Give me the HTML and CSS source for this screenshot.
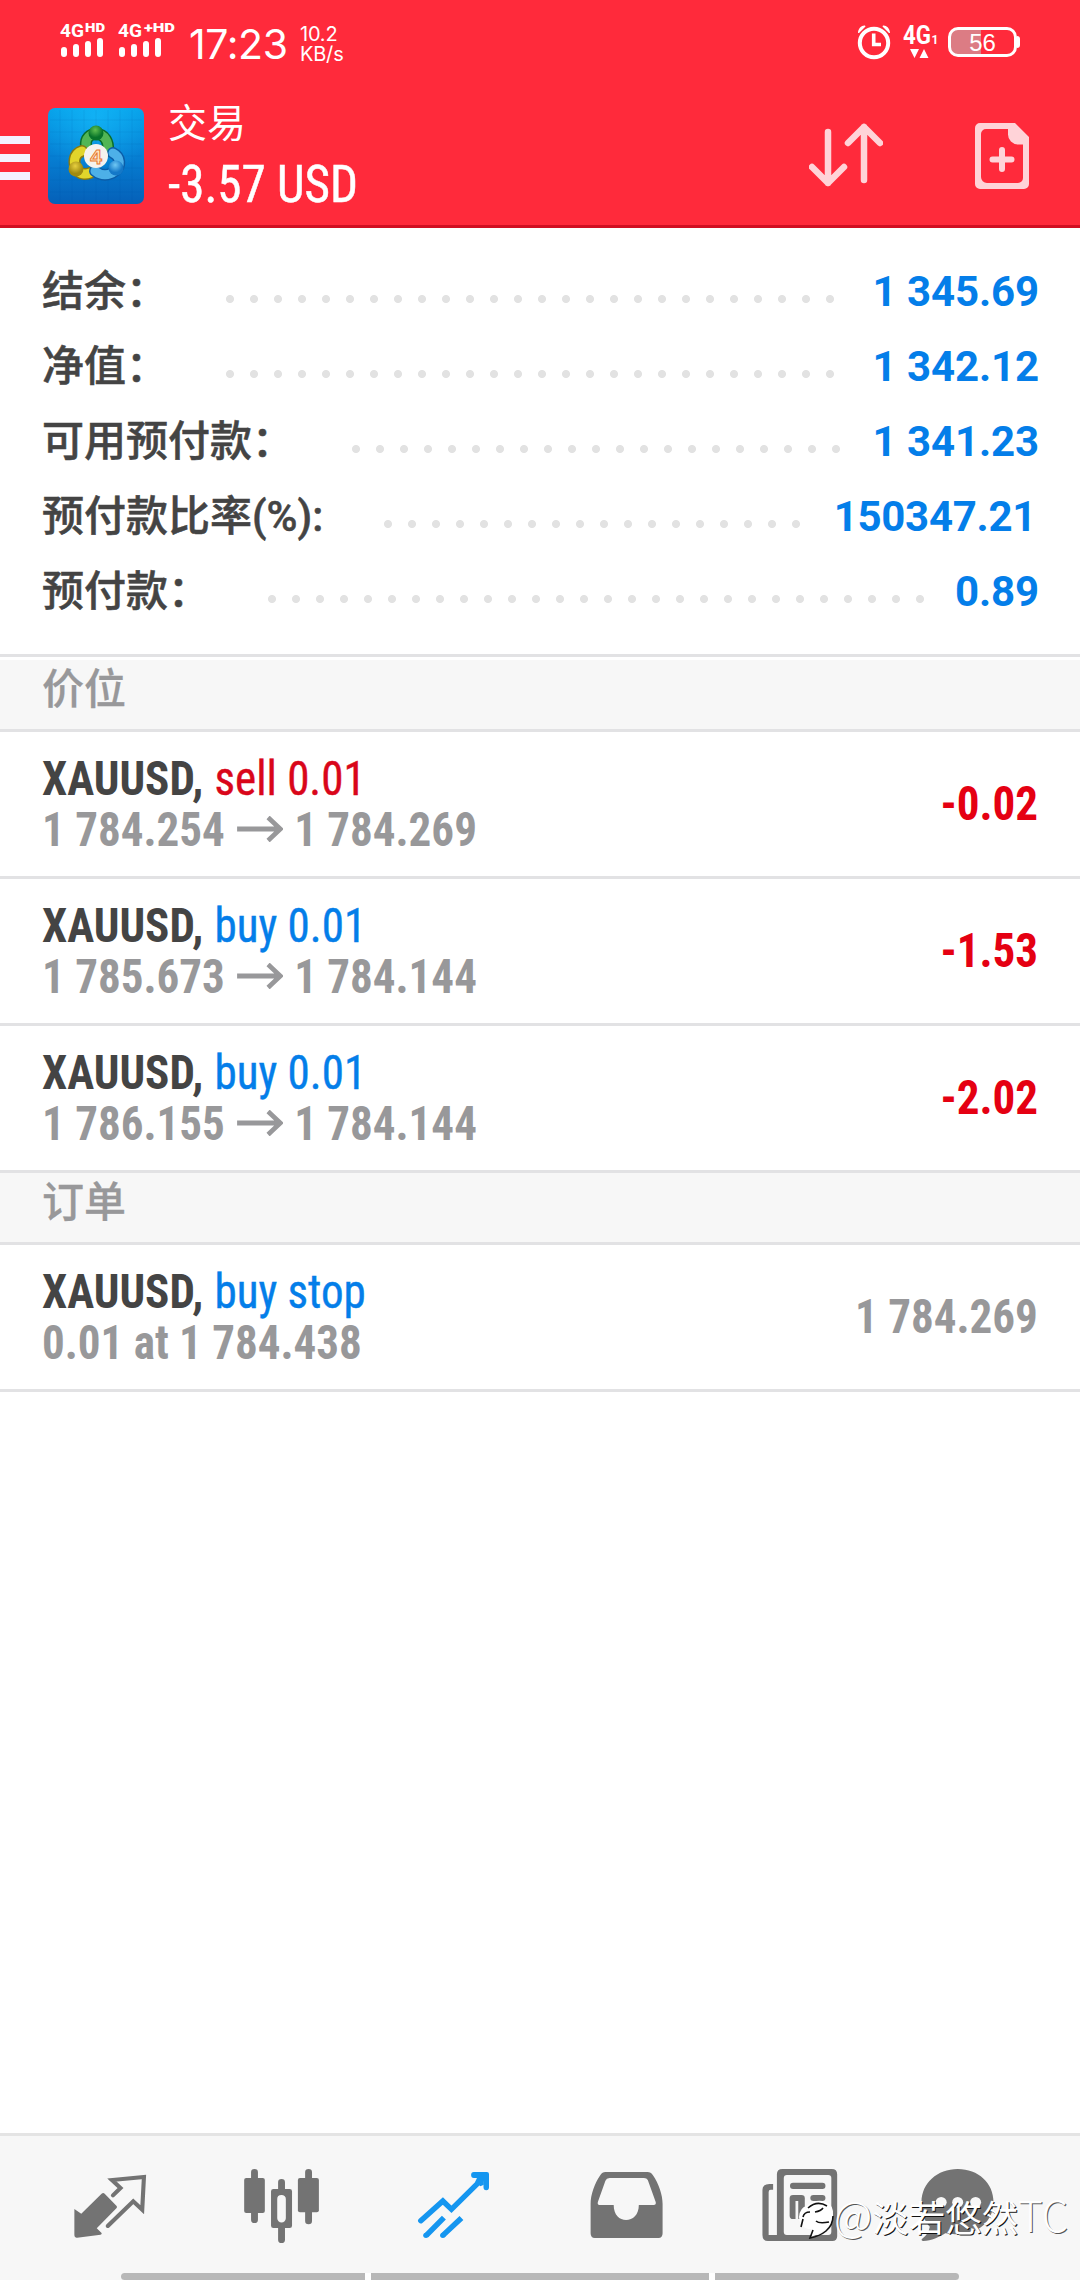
FILE: index.html
```html
<!DOCTYPE html>
<html lang="zh-CN">
<head>
<meta charset="utf-8">
<title>交易</title>
<link rel="stylesheet" href="styles.css">
</head>
<body>
<div class="screen">
  <header class="header">
    <div class="status">
      <svg class="sig1" viewBox="0 0 50 40" width="50" height="40">
        <text class="net" x="0" y="15" textLength="24" lengthAdjust="spacingAndGlyphs">4G</text>
        <text class="net-sup" x="25" y="10" textLength="20" lengthAdjust="spacingAndGlyphs">HD</text>
        <path class="bars" d="M4 28v4M16 25v7M28 22v10M40 19v13"/>
      </svg>
      <svg class="sig2" viewBox="0 0 60 40" width="60" height="40">
        <text class="net" x="0" y="15" textLength="24" lengthAdjust="spacingAndGlyphs">4G</text>
        <text class="net-sup" x="26" y="10" textLength="31" lengthAdjust="spacingAndGlyphs">+HD</text>
        <path class="bars" d="M4 28v4M16 25v7M28 22v10M40 19v13"/>
      </svg>
      <span class="time">17:23</span>
      <span class="speed"><span>10.2</span><span>KB/s</span></span>
      <svg class="alarm" viewBox="0 0 36 36" width="36" height="36">
        <g fill="none" stroke="#fff">
          <circle cx="18" cy="19" r="14.2" stroke-width="4"/>
          <path d="M17.700 9.500v11h7.300" stroke-width="3.600"/>
        </g>
        <path fill="#fff" d="M2 9C2 4 6 1 9 1.500L9.500 2.500 3 9zM34 9C34 4 30 1 27 1.500L26.500 2.500 33 9z"/>
      </svg>
      <svg class="data" viewBox="0 0 36 36" width="36" height="36">
        <text class="data-4g" x="0" y="19" textLength="28" lengthAdjust="spacingAndGlyphs">4G</text>
        <text class="data-1" x="28.500" y="19">1</text>
        <path fill="#fff" d="M7 24h9l-4.500 9zM16.500 33h9L21 24z"/>
      </svg>
      <span class="battery"><span class="cell">56</span><span class="tip"></span></span>
    </div>
    <div class="appbar">
      <svg class="menu" viewBox="0 0 30 44" width="30" height="44"><path fill="#f4f1ff" d="M0 0h30v8H0zM0 18h30v8H0zM0 36h30v8H0z"/></svg>
      <svg class="logo" viewBox="0 0 96 96" width="96" height="96">
        <defs>
          <linearGradient id="sky" x1="0" y1="0" x2="0" y2="1"><stop offset="0" stop-color="#06a0e8"/><stop offset=".5" stop-color="#067fd3"/><stop offset="1" stop-color="#0560b8"/></linearGradient>
          <radialGradient id="glow" cx=".5" cy=".1" r=".6"><stop offset="0" stop-color="#18c0ff" stop-opacity=".6"/><stop offset="1" stop-color="#18c0ff" stop-opacity="0"/></radialGradient>
          <radialGradient id="gr" cx=".45" cy=".3"><stop offset="0" stop-color="#5fc050"/><stop offset="1" stop-color="#08742a"/></radialGradient>
          <radialGradient id="ye" cx=".45" cy=".3"><stop offset="0" stop-color="#e8d040"/><stop offset="1" stop-color="#a08a10"/></radialGradient>
          <radialGradient id="bl" cx=".45" cy=".3"><stop offset="0" stop-color="#70c8f4"/><stop offset="1" stop-color="#1478c8"/></radialGradient>
        </defs>
        <rect width="96" height="96" rx="7" fill="url(#sky)"/>
        <rect width="96" height="96" rx="7" fill="url(#glow)"/>
        <path d="M12 2v92M24 2v92M36 2v92M48 2v92M60 2v92M72 2v92M84 2v92M2 12h92M2 24h92M2 36h92M2 48h92M2 60h92M2 72h92M2 84h92" stroke="#0a5cab" stroke-opacity=".1"/>
        <g fill="none" stroke-linecap="round">
          <path d="M38 38C37 30 42 26 48 26c9 0 13 8 12 17" stroke="#0a6d2b" stroke-width="12"/>
          <path d="M38 38C37 30 42 26 48 26c9 0 13 8 12 17" stroke="#52b655" stroke-width="9"/>
          <path d="M34 43c-9 3-9 13-5 19 3 4 8 5 13 3" stroke="#897910" stroke-width="12"/>
          <path d="M34 43c-9 3-9 13-5 19 3 4 8 5 13 3" stroke="#e2d52b" stroke-width="9"/>
          <path d="M65 45c8 4 8 13 2 18-6 5-14 5-20 0" stroke="#0b5da8" stroke-width="12"/>
          <path d="M65 45c8 4 8 13 2 18-6 5-14 5-20 0" stroke="#4db0e8" stroke-width="9"/>
        </g>
        <circle cx="48" cy="25" r="7.500" fill="url(#gr)"/>
        <circle cx="28" cy="61" r="7.500" fill="url(#ye)"/>
        <circle cx="68" cy="60" r="7.500" fill="url(#bl)"/>
        <circle cx="48" cy="48" r="12" fill="#f5f2ee"/>
        <text x="48" y="55.500" class="four">4</text>
      </svg>
      <div class="titles">
        <div class="title">交易</div>
        <div class="total cond">-3.57 USD</div>
      </div>
      <svg class="sort" viewBox="0 0 74 64" width="74" height="64"><path d="M19 9v51M3 44l16 16 16-16M55 57V4M39 20L55 4l16 16"/></svg>
      <svg class="new" viewBox="0 0 54 66" width="54" height="66">
        <path fill="#ffd3d8" fill-rule="evenodd" d="M5 0H40L54 14V61a5 5 0 0 1-5 5H5a5 5 0 0 1-5-5V5a5 5 0 0 1 5-5zM33 6H11a5 5 0 0 0-5 5V54a6 6 0 0 0 6 6H43a5 5 0 0 0 5-5V21.500H43A10 10 0 0 1 33 11.500z"/>
        <path d="M27 27v19M17.500 36.500h19" fill="none" stroke="#ffd3d8" stroke-width="6" stroke-linecap="round"/>
      </svg>
    </div>
  </header>

  <section class="summary">
    <div class="line"><span class="label">结余：</span><span class="dots d1"></span><span class="amount">1 345.69</span></div>
    <div class="line"><span class="label">净值：</span><span class="dots d1"></span><span class="amount">1 342.12</span></div>
    <div class="line"><span class="label">可用预付款：</span><span class="dots d3"></span><span class="amount">1 341.23</span></div>
    <div class="line"><span class="label">预付款比率(%):</span><span class="dots d4"></span><span class="amount ratio">150347.21</span></div>
    <div class="line"><span class="label">预付款：</span><span class="dots d5"></span><span class="amount">0.89</span></div>
  </section>

  <h2 class="group first">价位</h2>
  <div class="row">
    <div class="info"><div class="sym cond">XAUUSD, <span class="sell">sell 0.01</span></div>
    <div class="px cond">1 784.254<svg class="arrow" viewBox="0 0 49 26" width="49" height="26"><path d="M0 13h46M33 1.500L46 13 33 24.500"/></svg>1 784.269</div></div>
    <div class="profit cond">-0.02</div>
  </div>
  <div class="row">
    <div class="info"><div class="sym cond">XAUUSD, <span class="buy">buy 0.01</span></div>
    <div class="px cond">1 785.673<svg class="arrow" viewBox="0 0 49 26" width="49" height="26"><path d="M0 13h46M33 1.500L46 13 33 24.500"/></svg>1 784.144</div></div>
    <div class="profit cond">-1.53</div>
  </div>
  <div class="row">
    <div class="info"><div class="sym cond">XAUUSD, <span class="buy">buy 0.01</span></div>
    <div class="px cond">1 786.155<svg class="arrow" viewBox="0 0 49 26" width="49" height="26"><path d="M0 13h46M33 1.500L46 13 33 24.500"/></svg>1 784.144</div></div>
    <div class="profit cond">-2.02</div>
  </div>
  <h2 class="group">订单</h2>
  <div class="row">
    <div class="info"><div class="sym cond">XAUUSD, <span class="buy">buy stop</span></div>
    <div class="px cond">0.01 at 1 784.438</div></div>
    <div class="profit quote cond">1 784.269</div>
  </div>

  <nav class="tabs">
    <svg viewBox="203.300 135 232.300 240" preserveAspectRatio="none">
      <path fill="#737373" d="M295 221q5-4 9 0l34 36q4 4 0 8l-57 60 14 14q2 4-3 5l-68 9q-8 1-8-7v-79l20 14z"/>
      <path fill="none" stroke="#737373" stroke-width="12" stroke-linecap="round" stroke-linejoin="miter" d="M328 226l22-22-25-24 93-9-5 98-26-25-74 74"/>
    </svg>
    <svg viewBox="702.700 135 232.300 240" preserveAspectRatio="none">
      <path fill="none" stroke="#737373" stroke-width="20" stroke-linecap="round" d="M739 157v142M896 157v146M817.500 187v25M817.500 322v37"/>
      <rect x="709" y="174" width="60" height="105" rx="6" fill="#737373"/><rect x="865" y="174" width="61" height="103" rx="6" fill="#737373"/>
      <path fill="#737373" fill-rule="evenodd" d="M794 207h47a7 7 0 0 1 7 7v103a7 7 0 0 1-7 7h-47a7 7 0 0 1-7-7V214a7 7 0 0 1 7-7zM817 225a12 12 0 0 0-12 12v58a12 12 0 0 0 25 0v-58a12 12 0 0 0-13-12z"/>
    </svg>
    <svg viewBox="1202.200 135 232.300 240" preserveAspectRatio="none">
      <path fill="none" stroke="#1596f0" stroke-width="16" stroke-linecap="round" d="M1222 302l64-59 25 25 96-98"/>
      <path fill="none" stroke="#1596f0" stroke-width="16" stroke-linecap="butt" d="M1238 346l51-53M1286 346l54-52"/>
      <path fill="#1596f0" d="M1376 156h38q6 0 6 6v40a8 9 0 0 1-16 0v-28h-28a8 9 0 0 1 0-18z"/>
      <circle cx="1237" cy="346" r="8" fill="#1596f0"/><circle cx="1286" cy="346" r="8" fill="#1596f0"/>
      <path fill="#1596f0" d="M1385 174h20v20l-10 5-15-14z"/>
    </svg>
    <svg viewBox="133.600 135 232.300 240" preserveAspectRatio="none">
      <path fill="#737373" d="M190 156H312q10 0 16 10C345 192 356 225 356 252v88q0 14-12 14H159q-12 0-12-14v-88C147 225 158 192 175 166q6-10 15-10z"/>
      <path fill="#f7f7f7" d="M202 174h100q8 0 11 6l23 66q2 9-6 9h-43C287 285 269 300 250 300S214 285 214 255h-41q-7 0-5-9l22-64q3-8 12-8z"/>
    </svg>
    <svg viewBox="633.100 135 232.300 240" preserveAspectRatio="none">
      <path fill="#737373" d="M677 192v17h-7q-6 0-6 7v129h24V163q0-16 16-16H847q16 0 16 16v186q0 14-14 14H662q-16 0-16-18V210q0-18 20-18z"/>
      <rect x="708" y="165" width="138" height="180" rx="9" fill="#f7f7f7"/>
      <rect x="726" y="188" width="103" height="19" rx="9" fill="#737373"/>
      <rect x="725" y="225" width="44" height="72" rx="10" fill="#737373"/>
      <rect x="785" y="225" width="44" height="18" rx="9" fill="#737373"/>
      <path d="M746 243v54" stroke="#f7f7f7" stroke-width="8"/>
      <rect x="785" y="276" width="44" height="18" rx="9" fill="#737373"/>
    </svg>
    <svg viewBox="1132.600 135 232.300 240" preserveAspectRatio="none">
      <path fill="#737373" d="M1213 147c60 0 104 42 104 99 0 56-45 97-100 97-18 0-30-2-40-3-18 12-40 22-64 23-4 0-7-4-3-7 12-9 20-22 22-36-16-17-24-42-24-74 0-57 46-99 105-99z"/>
      <circle cx="1165" cy="247" r="16" fill="#f7f7f7"/><circle cx="1213" cy="247" r="16" fill="#f7f7f7"/><circle cx="1265" cy="247" r="16" fill="#f7f7f7"/>
    </svg>
  </nav>
  <div class="pager"><span></span><span></span><span></span></div>
  <div class="watermark">
    <svg viewBox="0 0 36 46" width="36" height="46">
      <path fill="#fff" d="M1 20Q2 10 9 9 18 1 28 5q8 3 7 14-1 13-22 21 3-7 2-8Q2 33 1 20z"/>
      <path fill="none" stroke="#111" stroke-width="1.600" d="M10 11Q19 3 29 9M5 20q1-5 7-5M17 15q6-1 8-4M5 22l-2 8M35 19q0 9-7 15-6 5-16 7l3-8M18 24q3 3 13 1"/>
    </svg><span><span class="latin">@</span>淡若悠然<span class="latin">TC</span></span>
  </div>
</div>
</body>
</html>
```
FILE: styles.css
```css
* { box-sizing: border-box; }
body { margin: 0; background: #fff; font-family: Roboto, "Noto Sans CJK SC", sans-serif; }
.screen { position: relative; display: flex; flex-direction: column; width: 1080px; height: 2280px; overflow: hidden; background: #fff; }
.cond { font-family: "Roboto Condensed", Roboto, "Noto Sans CJK SC", sans-serif; font-stretch: 75%; white-space: pre; transform: scaleX(.938); transform-origin: left; }

.header { height: 228px; background: #ff2a3b; border-bottom: 3px solid #d00f22; color: #fff; }
.status { display: flex; align-items: flex-start; height: 85px; padding: 22px 60px 0 60px; }
.status svg { overflow: visible; }
.net { font: 700 19px Roboto, sans-serif; fill: #fff; }
.net-sup { font: 900 13px Roboto, sans-serif; fill: #fff; }
.bars { fill: none; stroke: #fff; stroke-width: 6; stroke-linecap: round; }
.sig2 { margin-left: 8px; }
.time { width: 103px; margin: -5px 0 0 11px; font: 400 41px/54px Inter, Roboto, sans-serif; letter-spacing: -.4px; white-space: nowrap; }
.speed { display: flex; flex-direction: column; margin: 2px 0 0 8px; font: 400 20px/20px Inter, Roboto, sans-serif; letter-spacing: -.2px; }
.alarm { margin: 2px 0 0 auto; }
.data { margin: 3px 0 0 11px; }
.data-4g { font: 700 25px Roboto, sans-serif; fill: #fff; }
.data-1 { font: 700 12px Roboto, sans-serif; fill: #fff; }
.battery { display: flex; align-items: center; margin: 5px 0 0 9px; }
.cell { width: 69px; height: 30px; border: 3px solid #fff; border-radius: 10px; background: linear-gradient(90deg, #dc7c84 48%, transparent 48%); font: 400 24px/25px "Liberation Sans", sans-serif; text-align: center; }
.tip { width: 3px; height: 12px; background: #fff; border-radius: 0 3px 3px 0; }

.appbar { display: flex; align-items: flex-start; height: 140px; padding-right: 51px; }
.menu { margin-top: 51px; }
.logo { margin: 23px 0 0 18px; }
.four { font: 700 21px "Liberation Sans", sans-serif; fill: #ffe9c0; stroke: #e87830; stroke-width: 1; text-anchor: middle; }
.titles { margin: 10px 0 0 24px; flex: 1; }
.title { font-size: 39px; line-height: 58px; font-weight: 400; }
.total { margin-top: 2px; font-size: 51px; line-height: 60px; font-weight: 400; -webkit-text-stroke: .5px #fff; transform: scaleX(.962); }
.sort { margin: 38px 92px 0 0; fill: none; stroke: #ffd3d8; stroke-width: 6.500; stroke-linecap: round; stroke-linejoin: round; }
.new { margin-top: 38px; }

.summary { height: 426px; padding: 26px 40px 0 42px; }
.line { display: flex; height: 75px; line-height: 75px; font-size: 42px; }
.label { flex: none; color: #444; font-weight: 500; white-space: nowrap; -webkit-text-stroke: .5px #444; }
.dots { height: 8px; margin-top: 41px; background: radial-gradient(circle at 12px 4px, #e2e2e2 3.600px, transparent 4.400px) 0 0 / 24px 8px repeat-x; }
.d1 { width: 624px; margin-left: 50px; }
.d3 { width: 504px; margin-left: 50px; }
.d4 { width: 432px; margin-left: 53px; }
.d5 { width: 672px; margin-left: 50px; }
.amount { margin: 0 1px 0 auto; color: #047ee9; font-weight: 700; letter-spacing: -.1px; white-space: nowrap; }
.ratio { margin-right: 4px; letter-spacing: -.3px; }

.group { height: 72px; margin: 0; padding-left: 42px; background: #f7f7f7; border-bottom: 3px solid #e2e2e4; color: #98989a; font-size: 42px; font-weight: 500; line-height: 60px; -webkit-text-stroke: .3px #98989a; }
.first { height: 78px; border-top: 3px solid #e2e2e4; box-shadow: inset 0 3px #fff; padding-top: 3px; }
.row { display: flex; align-items: flex-start; justify-content: space-between; height: 147px; padding: 21px 42px 0 42px; border-bottom: 3px solid #e2e2e4; font-size: 48px; }
.info { line-height: 51px; }
.sym { color: #444; font-weight: 700; }
.sym span { margin-left: 1px; font-weight: 400; -webkit-text-stroke: .4px currentColor; }
.sym .sell { color: #d9061a; }
.sym .buy { color: #047ee9; }
.px { color: #98989a; font-weight: 700; }
.arrow { position: relative; top: -4px; margin: 0 12px 0 13px; fill: none; stroke: #98989a; stroke-width: 5; }
.profit { margin-top: 25px; line-height: 51px; color: #e50012; font-weight: 700; transform-origin: right; }
.quote { color: #98989a; }

.tabs { display: grid; grid-template-columns: repeat(6, 172px); justify-items: center; height: 147px; margin-top: auto; padding: 29px 24px 0; background: #f7f7f7; border-top: 3px solid #e4e4e4; }
.tabs svg { width: 80px; height: 80px; overflow: visible; }
.pager { position: absolute; left: 121px; bottom: 0; display: grid; grid-template-columns: 244px 338px 244px; gap: 6px; width: 838px; height: 7px; background: #fff; border-radius: 4px; overflow: hidden; }
.pager span { background: #b8b8b8; }
.watermark { position: absolute; left: 798px; top: 2197px; display: flex; color: #fff; font: 400 36.500px/34px "Noto Sans CJK SC", sans-serif; text-shadow: 1px 1px 0 #111; white-space: nowrap; }
.latin { font-size: 42px; font-weight: 300; text-shadow: 1px 1px 0 #555; }
```
